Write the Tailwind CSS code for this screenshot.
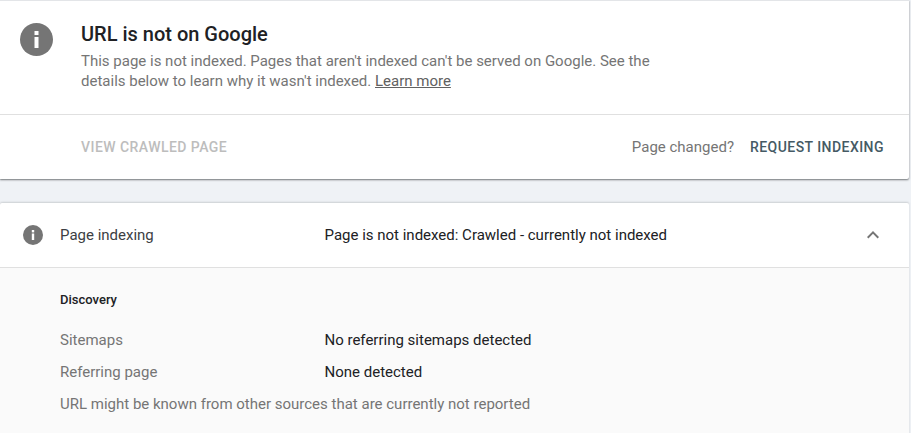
<!DOCTYPE html>
<html lang="en">
<head>
    <meta charset="UTF-8">
    <script src="https://cdn.jsdelivr.net/npm/@tailwindcss/browser@4"></script>
    <title>URL Inspection</title>
</head>
<body class="h-[433px] overflow-hidden bg-[#eff2f6] font-['Roboto',sans-serif]">
<div class="w-[909px] h-[179px] bg-white border-t border-[#e3e5e8] rounded-br-[2px] shadow-[0_1px_2px_rgba(60,64,67,0.7)]">
    <div class="h-[114px] flex border-b border-[#e0e0e0]">
        <div class="w-[81px] pl-[20px] pt-[22px] shrink-0">
            <svg class="w-[33px] h-[33px]" viewBox="0 0 33 33">
                <circle cx="16.5" cy="16.5" r="16.5" fill="#757575"/>
                <rect x="14.5" y="14" width="4" height="11" fill="#fff"/>
                <rect x="14.5" y="8" width="4" height="4" fill="#fff"/>
            </svg>
        </div>
        <div class="pt-[19px]">
            <h1 class="text-[20px] leading-[28px] font-medium text-[#202124]">URL is not on Google</h1>
            <p class="mt-[3px] w-[600px] text-[15px] leading-[20px] text-[#757575]">This page is not indexed. Pages that aren't indexed can't be served on Google. See the details below to learn why it wasn't indexed. <a class="underline text-[#616161]" href="#">Learn more</a></p>
        </div>
    </div>
    <div class="h-[64px] flex items-center justify-between pl-[81px] pr-[25px]">
        <span class="text-[14px] leading-[16px] -mt-[1px] font-medium tracking-[0.45px] text-[#bdbdbd]">VIEW CRAWLED PAGE</span>
        <div class="flex items-center gap-[16px]">
            <span class="text-[15px] leading-[22px] -mt-[1px] text-[#757575]">Page changed?</span>
            <span class="text-[14px] leading-[16px] -mt-[1px] font-medium tracking-[0.45px] text-[#455a64]">REQUEST INDEXING</span>
        </div>
    </div>
</div>
<div class="w-[909px] mt-[24px] bg-white rounded-t-[2px] shadow-[0_-1px_2px_rgba(60,64,67,0.2)]">
    <div class="h-[65px] flex items-center border-b border-[#e0e0e0]">
        <div class="w-[60px] pl-[23px] shrink-0">
            <svg class="w-[20px] h-[20px]" viewBox="0 0 20 20">
                <circle cx="10" cy="10" r="10" fill="#757575"/>
                <rect x="8.8" y="8.5" width="2.4" height="6.5" fill="#fff"/>
                <rect x="8.8" y="5" width="2.4" height="2.4" fill="#fff"/>
            </svg>
        </div>
        <div class="w-[264.5px] text-[15px] text-[#3c4043]">Page indexing</div>
        <div class="flex-1 text-[15px] text-[#202124]">Page is not indexed: Crawled - currently not indexed</div>
        <svg class="w-[24px] h-[24px] mr-[24px]" viewBox="0 0 24 24"><path d="M7.4 15.4 12 10.8l4.6 4.6L18 14l-6-6-6 6z" fill="#757575"/></svg>
    </div>
    <div class="h-[170px] bg-[#fafafa] pl-[60px] pt-[24px]">
        <h2 class="text-[13px] leading-[16px] font-medium text-[#202124]">Discovery</h2>
        <div class="mt-[16px] flex h-[32px] items-center text-[15px]">
            <span class="w-[264.5px] text-[#757575]">Sitemaps</span>
            <span class="text-[#202124]">No referring sitemaps detected</span>
        </div>
        <div class="flex h-[32px] items-center text-[15px]">
            <span class="w-[264.5px] text-[#757575]">Referring page</span>
            <span class="text-[#202124]">None detected</span>
        </div>
        <div class="flex h-[32px] items-center text-[15px] text-[#757575]">URL might be known from other sources that are currently not reported</div>
    </div>
</div>
</body>
</html>
